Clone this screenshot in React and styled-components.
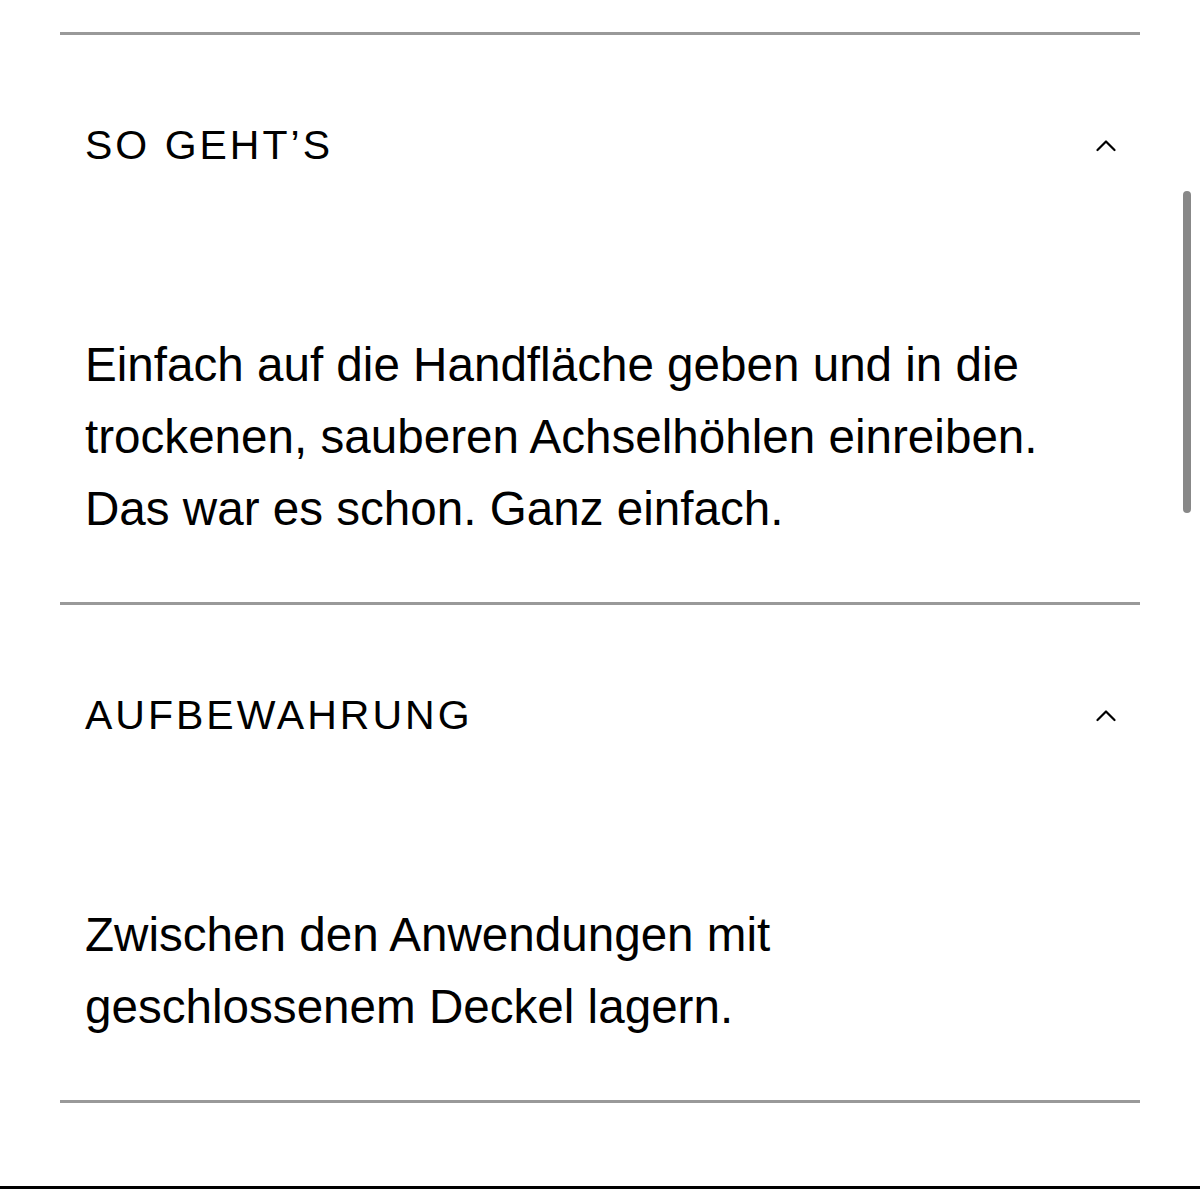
import React from 'react';
import styled, { createGlobalStyle } from 'styled-components';

const GlobalStyle = createGlobalStyle`
    html, body {
        margin: 0;
        padding: 0;
        background: #fff;
    }
    body {
        font-family: "Liberation Sans", Arial, Helvetica, sans-serif;
        color: #000;
    }
`;

const Page = styled.div`
    box-sizing: border-box;
    min-height: 100vh;
    padding: 32px 60px 0;
    border-bottom: 3px solid #000;
    position: relative;
`;

const List = styled.div`
    border-bottom: 3px solid #999;
`;

const Section = styled.section`
    border-top: 3px solid #999;
    padding: 0 24px 57px 25px;
`;

const Header = styled.div`
    height: 220px;
    display: flex;
    align-items: center;
    justify-content: space-between;
`;

const Title = styled.h2`
    margin: 0;
    font-size: 41px;
    font-weight: 400;
    letter-spacing: 3px;
    line-height: 1;
    text-transform: uppercase;
`;

const Toggle = styled.button`
    border: none;
    background: none;
    padding: 0;
    width: 20px;
    height: 14px;
    display: flex;
    cursor: pointer;
`;

const Body = styled.p`
    margin: 74px 0 0;
    font-size: 47.6px;
    line-height: 72px;
    max-width: ${(props) => props.wrap}px;
`;

// iOS style overlay scrollbar
const ScrollThumb = styled.div`
    position: absolute;
    top: 191px;
    right: 9px;
    width: 8px;
    height: 322px;
    border-radius: 4px;
    background: #888;
`;

const Chevron = () => (
    <svg width="20" height="14" viewBox="0 0 20 14" fill="none">
        <polyline points="1.5,12 10,3.5 18.5,12" stroke="#000" strokeWidth="2.2" strokeLinecap="round" strokeLinejoin="round" />
    </svg>
);

const items = [
    {
        title: 'So geht’s',
        text: 'Einfach auf die Handfläche geben und in die trockenen, sauberen Achselhöhlen einreiben. Das war es schon. Ganz einfach.',
        wrap: 990,
    },
    {
        title: 'Aufbewahrung',
        text: 'Zwischen den Anwendungen mit geschlossenem Deckel lagern.',
        wrap: 760,
    },
];

const App = () => {
    return (
        <>
            <GlobalStyle />
            <Page>
                <List>
                    {items.map((a, i) => (
                        <Section key={i}>
                            <Header>
                                <Title>{a.title}</Title>
                                <Toggle aria-label="zuklappen"><Chevron /></Toggle>
                            </Header>
                            <Body wrap={a.wrap}>{a.text}</Body>
                        </Section>
                    ))}
                </List>
                <ScrollThumb />
            </Page>
        </>
    );
};

export default App;
